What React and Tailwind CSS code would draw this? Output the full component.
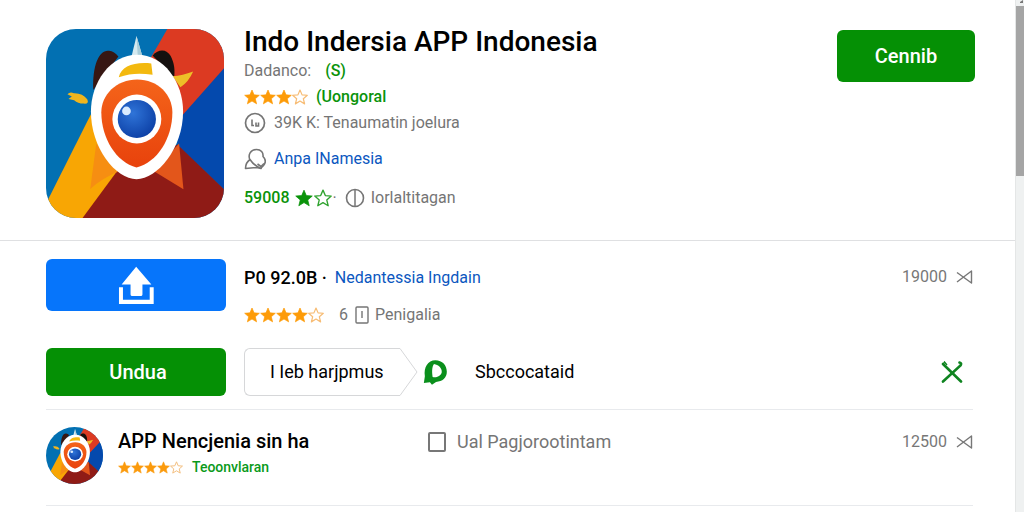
import React, { useState } from "react";

const apps = {
  title: "Indo Indersia APP Indonesia",
  other: "APP Nencjenia sin ha",
};

function RocketArt() {
  return (
    <svg
      viewBox="48 43 531 565"
      preserveAspectRatio="none"
      className="block h-full w-full"
      aria-hidden="true"
    >
      <defs>
        <radialGradient id="lens" cx="0.4" cy="0.35" r="0.7">
          <stop offset="0" stopColor="#2f74d8" />
          <stop offset="1" stopColor="#0c3fa5" />
        </radialGradient>
        <linearGradient id="shell" x1="0" y1="0" x2="0" y2="1">
          <stop offset="0" stopColor="#f4641a" />
          <stop offset="1" stopColor="#e8420c" />
        </linearGradient>
      </defs>
      <rect x="48" y="43" width="531" height="565" fill="#0270b2" />
      <path d="M410 43H579V165L440 320H250Z" fill="#dc3a22" />
      <path d="M579 160L440 318V390L579 522Z" fill="#0449ad" />
      <path d="M150 608L230 480L440 388L579 522V608Z" fill="#8f1b16" />
      <path d="M182 298L58 545L48 565V608H157L262 465Z" fill="#f8a604" />
      <path d="M198 385L180 521Q215 490 262 470Z" fill="#f68e12" />
      <path d="M445 385L458 522L370 468Z" fill="#e3561b" />
      <path d="M189 225C186 150 207 104 236 108Q252 110 264 125Z" fill="#371713" />
      <path d="M366 122C385 101 409 104 420 124C431 146 433 165 430 190Z" fill="#15110f" />
      <path d="M318 64L302 130H337Z" fill="#d5e9ef" />
      <path d="M318 64L322 130H337Z" fill="#a9cdd9" />
      <path d="M112 238Q119 230 131 235Q157 234 171 253Q178 268 160 266Q143 266 132 256L115 252L125 245Z" fill="#f0b51e" />
      <path d="M426 184Q455 182 487 170Q473 202 449 217Z" fill="#edbf28" />
      <path
        d="M320 120C400 120 457 202 457 290C457 400 380 492 318 492C256 492 182 400 182 290C182 202 240 120 320 120Z"
        fill="#fff"
      />
      <path d="M265 187C273 155 308 141 362 146L366 180C330 174 300 175 265 187Z" fill="#f3b90f" />
      <path
        d="M320 194C382 194 425 240 425 292C425 370 380 442 318 457C258 442 213 370 213 292C213 240 258 194 320 194Z"
        fill="url(#shell)"
      />
      <circle cx="319" cy="312" r="73" fill="#fff" />
      <circle cx="319" cy="312" r="57" fill="url(#lens)" />
      <circle cx="288" cy="288" r="13" fill="#d9ebff" />
    </svg>
  );
}

function Star({ filled = true, className }) {
  return (
    <svg viewBox="0 0 24 24" className={`shrink-0 ${className}`} aria-hidden="true">
      <path
        d="M12 1.5l3.1 7.3 7.9.6-6 5.2 1.9 7.7L12 18.1l-6.9 4.2L7 14.6 1 9.4l7.9-.6z"
        fill={filled ? "currentColor" : "none"}
        stroke="currentColor"
        strokeWidth={filled ? 1 : 1.8}
        strokeLinejoin="round"
      />
    </svg>
  );
}

function Rating({ filled, total, small }) {
  return (
    <div className="flex shrink-0" role="img" aria-label={`${filled} of ${total}`}>
      {Array.from({ length: total }).map((_, i) => (
        <Star
          key={i}
          filled={i < filled}
          className={
            small
              ? i < filled
                ? "h-[13px] w-[13px] text-[#fb9a0c]"
                : "h-[13px] w-[13px] text-[#f3bd7c]"
              : i < filled
                ? "h-4 w-4 text-[#fd9b08]"
                : "h-4 w-4 text-[#f7bc74]"
          }
        />
      ))}
    </div>
  );
}

function Price({ value }) {
  return (
    <div className="flex h-[26px] items-center gap-[9px] text-base text-[#777]">
      <span>{value}</span>
      <svg viewBox="0 0 17 16" className="h-4 w-[17px]" aria-hidden="true">
        <path
          d="M1 3.5L15.500 14V2L1 13"
          fill="none"
          stroke="currentColor"
          strokeWidth="1.4"
          strokeLinejoin="round"
        />
      </svg>
    </div>
  );
}

function Header() {
  return (
    <header className="flex items-start border-b border-[#dfe0e2] pt-[29px] pr-10 pb-[22px] pl-[46px]">
      <div className="h-[189px] w-[178px] shrink-0 overflow-hidden rounded-[30px]">
        <RocketArt />
      </div>

      <div className="mt-px ml-5 flex-1 text-base text-[#757575]">
        <h1 className="text-[28px] leading-6 font-medium text-black">{apps.title}</h1>

        <p className="mt-1 flex h-[26px] items-center gap-[14px]">
          <span>Dadanco:</span>
          <span className="font-medium text-[#0a930a]">(S)</span>
        </p>

        <div className="flex h-[26px] items-center gap-2">
          <Rating filled={3} total={4} />
          <span className="font-medium text-[#0a930a]">(Uongoral</span>
        </div>

        <div className="flex h-[26px] items-center gap-2">
          <svg viewBox="0 0 22 22" className="h-[22px] w-[22px]" fill="none" stroke="currentColor" aria-hidden="true">
            <circle cx="11" cy="11" r="9.5" strokeWidth="1.7" />
            <path d="M8 7.500V13.500H10M12 10.500V14H14.500V10.500" strokeWidth="1.6" />
          </svg>
          <span>39K K: Tenaumatin joelura</span>
        </div>

        <div className="mt-[10px] flex h-[26px] items-center gap-2">
          <svg
            viewBox="0 0 22 22"
            className="h-[22px] w-[22px]"
            fill="none"
            stroke="currentColor"
            strokeWidth="1.6"
            strokeLinejoin="round"
            aria-hidden="true"
          >
            <path d="M6 12C3.500 6.500 7 1.500 12.500 1.500C17 1.500 19.500 4.500 19 8.500C21.500 11 22 14.500 19.500 17.500L16.500 20.500" />
            <path d="M6 11.500C2.500 14 1.500 17 1.500 20.500L12.500 19.500L17 20.500C12.500 18.500 8.500 15.500 6 11.500" />
            <path d="M13.500 16L17 18.500L20 15.500" />
          </svg>
          <a href="#developer" className="text-[#0b57c0]">
            Anpa INamesia
          </a>
        </div>

        <div className="mt-[13px] flex h-[26px] items-center">
          <span className="font-medium text-[#0a930a]">59008</span>
          <Star className="ml-[6px] h-[18px] w-[18px] text-[#0a930a]" />
          <Star filled={false} className="ml-px h-[18px] w-[18px] text-[#2fa32f]" />
          <span>·</span>
          <svg viewBox="0 0 20 20" className="ml-2 h-5 w-5" fill="none" stroke="currentColor" aria-hidden="true">
            <circle cx="10" cy="10" r="8.5" strokeWidth="1.6" />
            <path d="M10 2V18" strokeWidth="1.5" />
          </svg>
          <span className="ml-[6px]">Iorlaltitagan</span>
        </div>
      </div>

      <button
        type="button"
        className="mt-px h-[52px] w-[138px] shrink-0 rounded-md bg-[#059005] text-xl font-medium text-white"
      >
        Cennib
      </button>
    </header>
  );
}

function InstallSection() {
  return (
    <section className="border-b border-[#e8eaed] pt-[18px] pb-[13px]">
      <div className="flex items-start">
        <button
          type="button"
          aria-label="Upload"
          className="flex h-[52px] w-[180px] shrink-0 items-center justify-center rounded-md bg-[#0675fb]"
        >
          <svg viewBox="250 48 110 118" className="h-[39px] w-[37px]" fill="#fff" aria-hidden="true">
            <path d="M304 50L350 104H323V134Q323 139 318 139H292Q287 139 287 134V104H260Z" />
            <path d="M252 112H264V150H345V112H357V163H252Z" />
          </svg>
        </button>

        <div className="ml-[18px] flex-1">
          <div className="mt-[6px] flex h-[26px] items-center">
            <span className="text-lg font-medium text-black">P0 92.0B ·</span>
            <a href="#details" className="ml-2 text-base text-[#0b57c0]">
              Nedantessia Ingdain
            </a>
          </div>

          <div className="mt-[11px] flex h-[26px] items-center text-base text-[#757575]">
            <Rating filled={4} total={5} />
            <span className="ml-[15px]">6</span>
            <svg viewBox="0 0 14 18" className="ml-[7px] h-[18px] w-[14px]" fill="none" stroke="currentColor" aria-hidden="true">
              <rect x="1" y="1" width="12" height="16" rx="1" strokeWidth="1.4" />
              <path d="M7 5V12" strokeWidth="1.4" />
            </svg>
            <span className="ml-[6px]">Penigalia</span>
          </div>
        </div>

        <div className="mt-[5px]">
          <Price value="19000" />
        </div>
      </div>

      <div className="mt-5 flex items-center">
        <button
          type="button"
          className="h-12 w-[180px] shrink-0 rounded-md bg-[#059005] pr-1 pl-2 text-xl font-medium text-white"
        >
          Undua
        </button>

        <button type="button" className="ml-[18px] flex text-lg text-black">
          <span className="flex h-12 w-[156px] items-center rounded-l-md border border-r-0 border-[#d6d7d9] pl-[25px]">
            I Ieb harjpmus
          </span>
          <svg viewBox="0 0 18 48" className="h-12 w-[18px]" fill="none" stroke="#d6d7d9" aria-hidden="true">
            <path d="M0 0.5L17 24L0 47.5" />
          </svg>
        </button>

        <svg viewBox="566 58 70 74" className="ml-[5px] h-[25px] w-[24px]" fill="#0a8f1c" aria-hidden="true">
          <path
            fillRule="evenodd"
            d="M602 59C623 59 636 74 636 93C636 111 623 122 604 123L592 131L586 124L568 126L571 106C567 80 580 59 602 59ZM598 70C591 80 592 96 594 108C604 111 618 106 621 94C622 82 611 72 598 70Z"
          />
        </svg>
        <span className="ml-7 flex-1 text-lg text-black">Sbccocataid</span>

        <button type="button" aria-label="Close" className="mr-[10px] text-[#0f8420]">
          <svg viewBox="0 0 22 22" className="h-[22px] w-[22px]" fill="none" stroke="currentColor" aria-hidden="true">
            <path d="M2 3L20 20.500" strokeWidth="2.6" strokeLinecap="round" />
            <path d="M2 20.500L19.500 4.500Q21 2 18.500 1.500" strokeWidth="2.6" strokeLinecap="round" />
            <path d="M2 3.500L3.500 1L6 4" strokeWidth="1.4" />
          </svg>
        </button>
      </div>
    </section>
  );
}

function OtherApp() {
  const [checked, setChecked] = useState(false);

  return (
    <section className="flex items-start border-b border-[#e8eaed] pt-[17px] pb-[21px]">
      <div className="flex w-[382px] shrink-0">
        <div className="h-[57px] w-[57px] shrink-0 overflow-hidden rounded-full">
          <RocketArt />
        </div>
        <div className="ml-[15px]">
          <h2 className="text-xl leading-7 font-medium text-black">{apps.other}</h2>
          <div className="flex h-6 items-center gap-[9px] text-sm">
            <Rating filled={4} total={5} small />
            <span className="font-medium text-[#0a9a1a]">Teoonvlaran</span>
          </div>
        </div>
      </div>

      <label className="mt-[2px] flex h-[26px] flex-1 items-center gap-[11px] text-lg text-[#757575]">
        <input
          type="checkbox"
          checked={checked}
          onChange={(e) => setChecked(e.target.checked)}
          className="h-5 w-[18px] appearance-none rounded-[2px] border-2 border-[#777] checked:bg-[#777]"
        />
        Ual Pagjorootintam
      </label>

      <div className="mt-[2px]">
        <Price value="12500" />
      </div>
    </section>
  );
}

function App() {
  return (
    <div className="flex min-h-screen bg-white font-[Roboto,sans-serif]">
      <main className="min-w-0 flex-1">
        <Header />
        <div className="pr-[42px] pl-[46px]">
          <InstallSection />
          <OtherApp />
        </div>
      </main>

      <div className="w-[9px] shrink-0 border-l border-[#e4e6e6] bg-[#eff1f1]">
        <svg viewBox="0 0 8 6" className="h-[6px] w-2" fill="#777" aria-hidden="true">
          <path d="M4 2L7 0V3H4Z" />
        </svg>
        <div className="h-[170px] bg-[#a5a5a5]" />
      </div>
    </div>
  );
}

export default App;
